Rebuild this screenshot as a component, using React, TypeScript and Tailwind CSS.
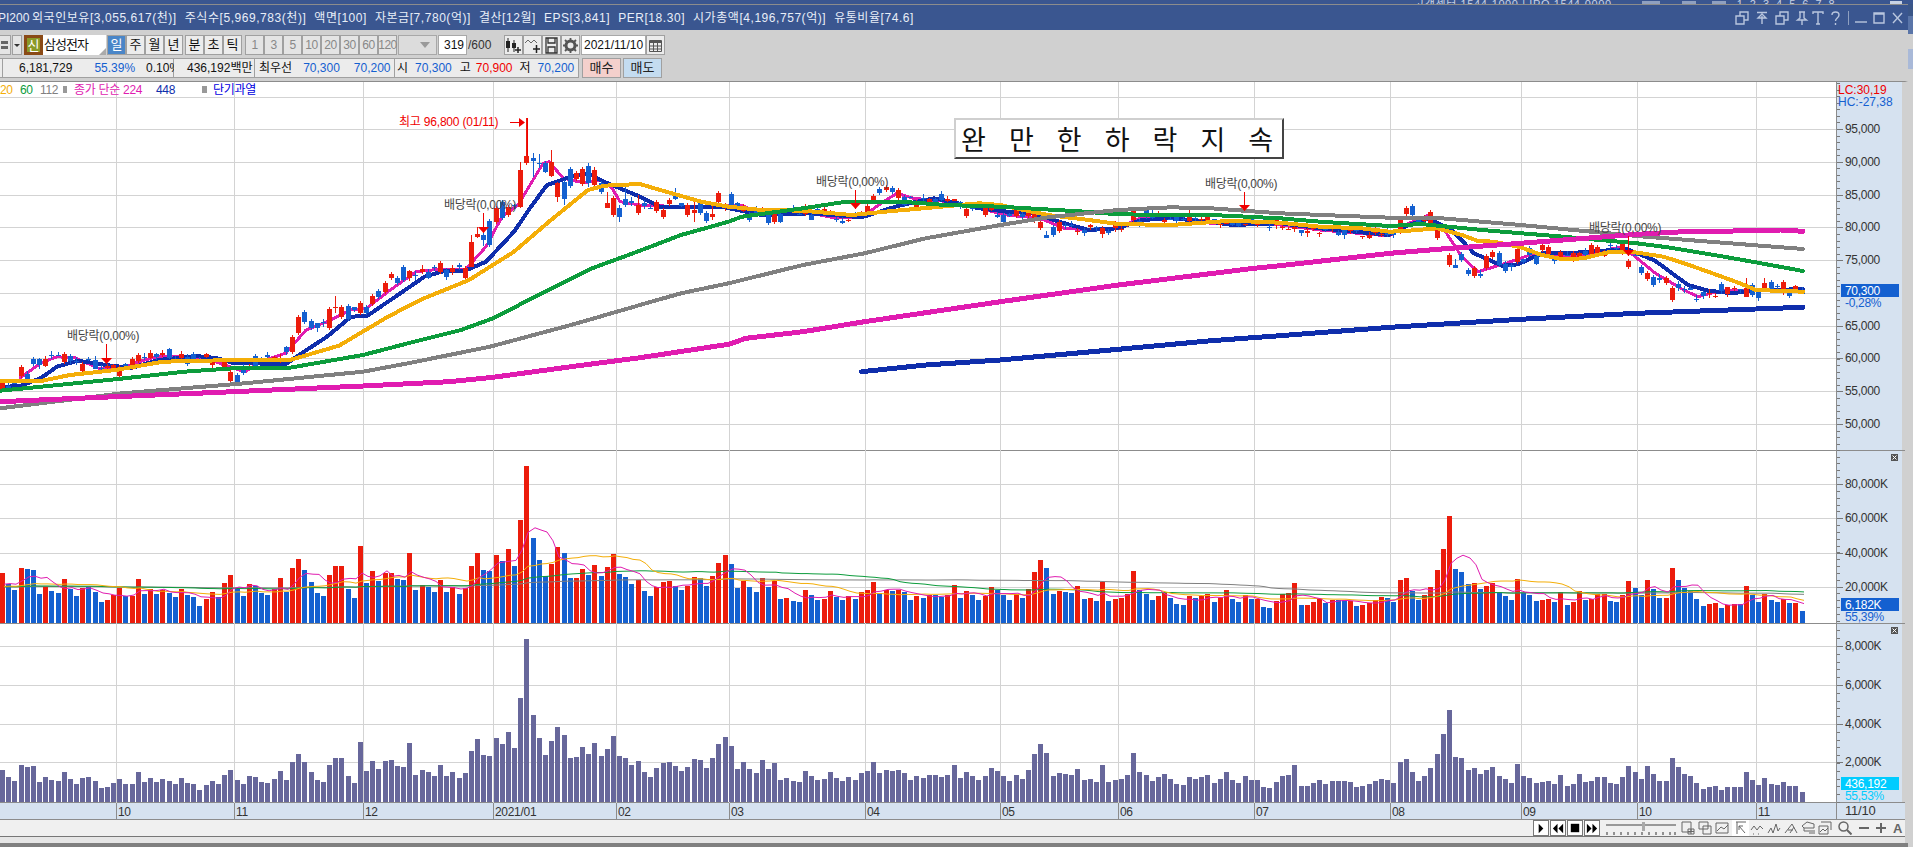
import React from "react";

type P = number[];
const poly = (p: P) => {
  const out: string[] = [];
  for (let i = 0; i < p.length; i += 2) out.push(p[i] + "," + p[i + 1]);
  return out.join(" ");
};

const MA448: P = [861.6,371.7,925.7,365,1000.4,360,1118.4,349.3,1211.4,340.7,1280,335.7,1390,327.3,1520.6,319.3,1637,313.3,1755.6,309,1803,307.3];
const MA224: P = [0,401.7,115.5,396.7,233.5,391.7,363,386,449,381.7,493,377.3,571,366.7,640,357.7,728.6,344.3,746,338.3,803,331.7,864.5,321.7,1000.4,301.7,1118.4,285,1254,268.3,1280,265.7,1390,253.3,1441.5,249,1520.6,243.3,1637,234.3,1683.7,231.7,1755.6,230.7,1780.6,230,1803,231.3];
const MA112: P = [0,408.3,122,393.3,245,383.3,363,371.7,408,363.3,490,346.7,571,325,640,305,681,293.3,728.6,283.3,803,265,864.5,253.3,925.7,238.3,1000.4,225,1048,217.3,1118,210,1170.6,207.3,1211,208.3,1280,213.3,1390,217.7,1441.5,218.3,1520.6,225,1637,236,1755.6,245.3,1803,249];
const MA60: P = [0,390.7,41,386.7,115.5,379.3,184,371.7,233.5,368.3,290,367.7,363,355,408,343.3,461,330,493,318.3,547,290.7,592,268.3,640,250.7,681,235,728.6,221.7,742,216.7,803,208.3,844,202,901,201.7,946,205,1000.4,206.7,1085,211.7,1118,214.3,1170.6,215,1211,215,1280,218.3,1320,221.7,1390,226,1421,224,1482,230,1563,236.7,1637,243.3,1667.6,247.3,1724,256.7,1755.6,262.3,1803,271];
const MA20: P = [0,381,41,381,70,375,115.5,370,163,361.7,233.5,360,290,360,339,345.7,388,316.7,420,300,469,280,514,251.7,551,220,588,190,604,185.7,640,184,660,190,701,201.7,728.6,206.7,762,210,803,210.7,852,215,885,211.7,934,207.3,979,203.3,1000,205,1048,215,1089,220,1118,224,1170.6,225,1232,220.7,1280,222.7,1320,226.7,1361,228.3,1390,231.7,1409,230.7,1437,228.3,1462,235,1478,241,1494,241.7,1520.6,247.3,1542,255,1563,259.3,1583,258.3,1611,251.7,1631,251.7,1663.5,256.7,1684,263.3,1708,271.7,1740,283.3,1756,290,1803,291.7];
const MA10: P = [0,387,20,386,41,378,57,366.7,78,360.7,106,365,131,368,159,360,196,356,216,358,233.5,363,286,364,302,353,327,336.7,351,316.7,367,316,392,299,424.5,276.7,445,270.7,465,270.7,486,261.7,514,231.7,531,206.7,547,185,571,176.7,588,173.3,604,181.7,640,196.7,660,206.7,681,207.3,721.6,206.7,746,211.7,762,215,811,213.3,861.6,217.3,901,205,934,198.3,958,203.3,979,208.3,1007,211.7,1032,213.3,1064.5,223.3,1089,230,1118,228.3,1142,220,1170.6,218.3,1211,221.7,1232,225,1280,223.3,1320,228.3,1389,235,1409,225,1429,218.3,1453.6,231.7,1474,253.3,1502,265.7,1518,264.3,1542,253.3,1575,252.7,1627,249,1655,260.7,1688,285,1708,290.7,1732,293.3,1755.6,290,1803,289.3];
const MA5: P = [20,378,41,363,57,356.7,75.5,358,98,368,118,370,139,361.7,159,356,180,356.7,204,358,233.5,368,245,371.7,261,361.7,286,353,306,330,327,321.7,351,310,367,308,388,291.7,416,271.7,441,269,465,270,486,246.7,502,216.7,518,205,543,163.3,549,161.7,563,178,584,183,600,180,612,188,620,201.7,640,205,681,206.7,742,205,762,215,803,211.7,832,217.3,861.6,217.3,881,203.3,897,193.3,913.5,198.3,950,201.7,979,208.3,1007,215,1040,218.3,1064.5,228.3,1089,230,1118,228.3,1142,217.3,1170.6,217.3,1211,223.3,1244,221.7,1280,225,1320,230,1389,236,1409,223.3,1429,215,1445.5,231.7,1461.7,256.7,1478,271.7,1506,263.3,1530,255,1562.6,256.7,1587,254,1623,246.7,1655.5,273.3,1683.7,290,1698,296.7,1720,290.7,1755.6,290.7,1803,290];

const ma5y = (x: number) => {
  if (x <= MA5[0]) return MA5[1] + 6;
  for (let i = 0; i < MA5.length - 2; i += 2) {
    if (x <= MA5[i + 2]) {
      const t = (x - MA5[i]) / (MA5[i + 2] - MA5[i]);
      return MA5[i + 1] + t * (MA5[i + 3] - MA5[i + 1]);
    }
  }
  return MA5[MA5.length - 1];
};

const CHUNKS = [
  { ox: 0, sx: 2.45, a: 5, b: 1562, s: "r372 b405 b423 r357 b360 b363 b435 r411 b426 b432 r390 b420 b441 r417 b414 b429 b459 r453 r438 r417 b441 r441 r390 b435 r420 b435 r423 b432 b444 r420 b438 b444 b471 r450 r429 b444 r402 r378 b417 b441 r405 b411 b432 b438 r420 r387 b429 r357 r330 b363 b399 b432 b441 r378 r351 r351 b420 b447 r291 b402 r366 b396 r372 r372 b390 b393 r312 b423 r408 b414 b429 r393 b429 r414 b435 r417 r351 r312 b363 b366 r318 b336 r300 b351 r213 r51 b267 b333 b381 r345 r294 b312 b387 r387 r360 b378 r348 b381 r354 r315 b375 b384 b405 r393" },
  { ox: 640, sx: 2.45, a: 10, b: 1557, s: "b426 b441 r414 r399 r396 b411 b423 r411 r384 b387 b411 r381 r342 r318 b345 b417 r396 b414 b429 r387 b414 r396 b450 r447 b456 b459 r423 b438 b453 r450 r426 b444 b453 r441 b450 r429 r423 r399 b432 r423 b426 r423 b429 b453 r441 b447 r438 b438 b444 r438 r408 b447 r426 b438 b453 r441 r414 b423 b438 b453 r435 b447 r420 r369 r333 b357 b435 r426 b429 b432 r411 b450 r447 b456 r399 b456 r450 r447 r435 r366 b423 b435 b453 r441 r432 b447 b465 b468 r441 b447 r441 r435 b459 r447 r423 b450 b459 r438 b450 r450 b474 b477 r456" },
  { ox: 1280, sx: 2.477, a: 5, b: 1292, s: "r435 r432 r402 b468 r468 r459 r450 b462 r453 b453 b453 r456 b471 r468 r462 r453 r444 b447 b459 r393 r387 b426 b453 r438 r414 r363 r300 r201 b360 b369 b405 r402 b420 r411 r402 b429 b441 b453 r390 b432 b438 b456 r453 r450 b459 r429 b468 r459 r426 b453 r450 r435 r435 b456 b459 r438 r396 b417 b438 r393 b420 b447 r447 r357 b393 b417 b426 b450 b471 r465 r462 b477 r468 r465 b465 r411 b438 b459 r435 b453 b459 r450 b462 r462 b486" },
];

type Bar = { x: number; up: boolean; h: number };
const bars: Bar[] = [];
for (const c of CHUNKS) {
  const toks = c.s.split(" ");
  toks.forEach((t, k) => {
    const x = c.ox + (c.a + ((c.b - c.a) * k) / (toks.length - 1)) / c.sx;
    const h = (522 - Number(t.slice(1))) / 3;
    bars.push({ x, up: t[0] === "r", h });
  });
}

const rnd = (i: number) => {
  const v = Math.sin(i * 12.9898 + 1.7) * 43758.5453;
  return v - Math.floor(v);
};

const OV: [number, number, number[][]][] = [
  [0, 2.45, [[48,800,828],[732,650,700],[747,635,665],[714,712,755],[760,662,685],[807,627,683],[822,620,625,588,640],[837,620,650],[852,618,658],[881,608,640],[897,622,640],[913,588,612],[927,572,590],[942,550,575],[957,522,535],[974,535,550],[989,502,540],[1141,503,533],[1155,425,500,405,500],[1170,402,410,380,415],[1184,405,420,385,438],[1199,363,435],[1216,325,365],[1231,305,353],[1246,320,345],[1275,210,320,185,325],[1292,168,188,55,195],[1307,175,182,160,230],[1322,188,192,162,205],[1337,190,215,183,218],[1351,187,228,150,230],[1366,250,290,245,305],[1383,247,297,240,315],[1398,208,258],[1412,220,237],[1427,208,252],[1442,198,248,188,260],[1459,210,255,202,260],[1474,250,275],[1488,310,325,275,325],[1503,295,345],[1518,325,350,315,365],[1535,298,315,260,320],[1563,315,340,285,345],[565,815,842],[580,825,850],[290,800,827],[322,778,805],[337,765,783],[152,762,787],[200,793,812],[79,778,792],[623,768,798],[594,798,820]]],
  [640, 2.45, [[42,305,332],[57,330,352],[72,300,313],[87,285,298,265,300],[116,315,345],[133,330,338,300,365],[148,310,340],[163,340,362],[177,342,352,312,360],[192,280,307],[224,282,318],[268,343,360],[285,325,345],[315,337,370],[329,340,365],[572,288,305],[587,268,280],[601,262,270],[618,265,275],[633,270,293],[648,292,315],[677,305,328],[800,328,348],[845,322,345],[890,345,365],[966,335,362],[981,365,385],[996,405,413,392,415],[1013,382,405],[1028,367,392],[1209,328,360],[1239,330,350]]],
  [1280, 2.477, [[295,355,395],[310,323,343],[325,318,345],[372,337,380],[387,390,413],[420,465,495],[435,495,503,478,505],[465,510,522],[480,505,528],[512,468,505],[527,455,472],[541,460,495],[588,448,485],[618,445,465],[648,435,450],[665,440,462],[695,455,478],[725,458,480],[772,435,462],[787,440,460],[848,427,458],[863,482,500],[893,502,520],[910,520,537],[925,530,555],[955,535,550],[970,565,600],[1155,565,590,535,592],[1170,555,585],[1200,550,567,535,570],[1215,547,572],[1247,547,578]]],
];
const overrides = OV.flatMap(([ox, sx, list]) =>
  list.map((o) => ({
    x: ox + o[0] / sx,
    t: 100 + o[1] / 3,
    b: 100 + o[2] / 3,
    hi: o[3] === undefined ? 100 + o[1] / 3 - 2 : 100 + o[3] / 3,
    lo: o[4] === undefined ? 100 + o[2] / 3 + 2 : 100 + o[4] / 3,
  }))
);

const candles = bars.map((b, i) => {
  const o = overrides.find((v) => Math.abs(v.x - b.x) < 2.6);
  if (o) return { x: b.x, up: b.up, t: o.t, b: o.b, hi: o.hi, lo: o.lo };
  const yc = ma5y(b.x) + (rnd(i) - 0.5) * 9;
  const bh = 1 + Math.floor(rnd(i + 500) * rnd(i + 900) * 9);
  const t = yc - bh / 2;
  return { x: b.x, up: b.up, t, b: t + bh, hi: t - rnd(i + 77) * 4, lo: t + bh + rnd(i + 33) * 4 };
});

// traded value (third pane) = volume x closing price
const values = bars.map((b, i) => {
  const c = candles[i];
  const close = b.up ? c.t : c.b;
  const p = 95000 - ((close - 129) / 32.8) * 5000;
  return b.h * p * 1.1404e-5;
});

const maVol = (k: number) => {
  const out: number[] = [];
  bars.forEach((b, i) => {
    let s = 0;
    for (let j = i - k + 1; j <= i; j++) s += j >= 0 ? bars[j].h : 36;
    out.push(Math.round(b.x + 2), 624 - s / k);
  });
  return out;
};

const RED = "#ec1c0c";
const BLUE = "#1460d0";
const GRID = "#d3d3d3";
const VX = [115.5, 233.5, 363, 493, 616, 728.6, 864.5, 1000.4, 1118.4, 1254.3, 1390, 1520.6, 1637, 1755.6];
const MONTHS = ["10", "11", "12", "2021/01", "02", "03", "04", "05", "06", "07", "08", "09", "10", "11"];

const Grid = ({ top, h, ys }: { top: number; h: number; ys: number[] }) => (
  <g stroke={GRID} strokeWidth="1" shapeRendering="crispEdges">
    {ys.map((y) => (
      <line key={y} x1="0" x2="1836" y1={y + 0.5} y2={y + 0.5} />
    ))}
    {VX.map((x) => (
      <line key={x} x1={Math.round(x) + 0.5} x2={Math.round(x) + 0.5} y1={top} y2={top + h} />
    ))}
  </g>
);

const Drop = ({ x, y1, y2, label }: { x: number; y1: number; y2: number; label: string }) => (
  <g>
    <text x={x - 39} y={y1 - 4} fontSize="12" fill="#444" letterSpacing="-0.3">
      {label}
    </text>
    <line x1={x + 0.5} x2={x + 0.5} y1={y1} y2={y2} stroke="#f00000" strokeWidth="1" shapeRendering="crispEdges" />
    <polygon points={`${x - 5},${y2 - 6} ${x + 6},${y2 - 6} ${x + 0.5},${y2}`} fill="#f00000" />
  </g>
);

const Axis = ({
  top,
  h,
  ticks,
  step,
  children,
}: {
  top: number;
  h: number;
  ticks: [number, string][];
  step: number;
  children?: React.ReactNode;
}) => {
  const minor: number[] = [];
  const base = ticks[0][0];
  for (let y = base - step * 40; y < top + h; y += step) if (y > top) minor.push(y);
  return (
    <div className="w-[66px] shrink-0 bg-[#d6e2f0] border-l border-[#8c8c8c]">
      <svg width="65" height={h} viewBox={`1837 ${top} 65 ${h}`} className="block">
        <g stroke="#777" strokeWidth="1" shapeRendering="crispEdges">
          {minor.map((y) => (
            <line key={y} x1="1837" x2="1840" y1={Math.round(y) + 0.5} y2={Math.round(y) + 0.5} />
          ))}
          {ticks.map(([y]) => (
            <line key={y} x1="1837" x2="1843" y1={y + 0.5} y2={y + 0.5} />
          ))}
        </g>
        {ticks.map(([y, t]) => (
          <text key={y} x="1845" y={y + 4} fontSize="12" fill="#333" letterSpacing="-0.3">
            {t}
          </text>
        ))}
        {children}
      </svg>
    </div>
  );
};

const Tag = ({ y, h = 13, bg, text, sub, subColor }: { y: number; h?: number; bg: string; text: string; sub: string; subColor: string }) => (
  <g>
    <rect x="1841" y={y} width="58" height={h} fill={bg} />
    <text x="1845" y={y + 10.5} fontSize="12" fill="#fff" letterSpacing="-0.3">
      {text}
    </text>
    <text x="1845" y={y + h + 10} fontSize="12" fill={subColor} letterSpacing="-0.3">
      {sub}
    </text>
  </g>
);

const CloseBox = ({ y }: { y: number }) => (
  <g>
    <rect x="1891" y={y} width="7" height="7" fill="#555" />
    <path d={`M1892.5 ${y + 1.5}l4 4m0-4l-4 4`} stroke="#fff" strokeWidth="1" />
  </g>
);

const Btn = ({ w, on, dim, children }: { w: string; on?: boolean; dim?: boolean; children?: React.ReactNode }) => (
  <div
    className={`${w} shrink-0 flex items-center justify-center border border-[#a0a0a0] text-[13px] ${
      on ? "bg-[#4a86c8] text-white" : dim ? "bg-[#e4e4e4] text-[#888]" : "bg-[#ececec] text-[#111]"
    }`}
  >
    {children}
  </div>
);

const TitleIcon = ({ d, ml }: { d: string; ml: string }) => (
  <svg width="14" height="14" viewBox="0 0 14 14" fill="none" stroke="#b9c6de" strokeWidth="1.4" className={`shrink-0 ${ml}`}>
    <path d={d} />
  </svg>
);

const Tool = ({ d, fill }: { d: string; fill?: boolean }) => (
  <svg width="14" height="14" viewBox="0 0 14 14" fill={fill ? "#666" : "none"} stroke="#666" strokeWidth={fill ? 0 : 1} className="shrink-0">
    <path d={d} />
  </svg>
);

const Small = ({ ml, c, children, w }: { ml: string; c?: string; children: React.ReactNode; w?: string }) => (
  <span className={`${ml} ${w ?? ""} ${c ?? "text-[#111]"} shrink-0 whitespace-nowrap`}>{children}</span>
);

const TITLE = ["외국인보유[3,055,617(천)]", "주식수[5,969,783(천)]", "액면[100]", "자본금[7,780(억)]", "결산[12월]", "EPS[3,841]", "PER[18.30]", "시가총액[4,196,757(억)]", "유통비율[74.6]"];

export default function App() {
  return (
    <div className="w-[1913px] h-[847px] overflow-hidden flex flex-col bg-[#808080] [font-family:'Liberation_Sans','Noto_Sans_CJK_KR',sans-serif]">
      <div className="h-[4px] w-full shrink-0 overflow-hidden bg-[#3a5690] flex items-end">
        <span className="ml-[1414px] text-[11px] leading-[11px] -mb-[6px] text-[#c8d2e4] whitespace-nowrap tracking-[0.6px]">고객센터 1544-1000 | IPO 1544-0000</span>
        <span className="ml-[30px] w-[18px] h-[3px] bg-[#8fa0c0]" />
        <span className="ml-[22px] w-[14px] h-[3px] bg-[#8fa0c0]" />
        <span className="ml-[16px] w-[14px] h-[3px] bg-[#8fa0c0]" />
        <span className="ml-[11px] text-[11px] leading-[11px] -mb-[6px] text-[#c8d2e4] whitespace-nowrap tracking-[7px]">12345678</span>
        <span className="ml-[48px] w-[12px] h-[3px] bg-[#c8d2e4]" />
      </div>
      <div className="flex flex-1 min-h-0">
        <div className="w-[1908px] shrink-0 flex flex-col border-t border-[#8c8c8c]">
          <div className="h-[25px] shrink-0 bg-[#3a5690] flex items-center overflow-hidden text-[12px] text-[#e8eef8]">
            <span className="-ml-[2px] w-[34px] shrink-0 whitespace-nowrap">PI200</span>
            <div className="flex gap-[8px] tracking-[0.55px] whitespace-nowrap">
              {TITLE.map((t) => (
                <span key={t}>{t}</span>
              ))}
            </div>
            <div className="ml-auto mr-[4px] flex items-center">
              <TitleIcon ml="" d="M1 5h8v8H1zM5 5V1h8v8H9" />
              <TitleIcon ml="ml-[6px]" d="M2 1.5h10M7 13V5M3 7l4-4 4 4z" />
              <TitleIcon ml="ml-[6px]" d="M1 5h8v8H1zM5 5V1h8v8H9" />
              <TitleIcon ml="ml-[6px]" d="M4 1h6M5 1v6L2.5 9h9L9 7V1M7 9v5" />
              <TitleIcon ml="ml-[2px]" d="M2 3V1h10v2M7 1v12M5 13h4" />
              <TitleIcon ml="ml-[3px]" d="M4 4c0-4 7-4 7 0 0 3-3.5 3-3.5 6M7.5 12v2" />
              <span className="ml-[6px] w-[1px] bg-[#8fa0c0] h-[14px]" />
              <TitleIcon ml="ml-[5px]" d="M1 11h12" />
              <TitleIcon ml="ml-[4px]" d="M2 2h10v10H2zM2 3h10" />
              <TitleIcon ml="ml-[4px]" d="M3 2l9 10M12 2L3 12" />
            </div>
          </div>
          <div className="h-[51px] shrink-0 bg-[#d0d0d0] pt-[5px] flex flex-col gap-[3px] text-[12px]">
            <div className="h-[20px] flex items-stretch">
              <div className="w-[11px] shrink-0 bg-[#e4e4e4] border-y border-r border-[#a0a0a0] flex flex-col justify-center pl-[1px] gap-[2px]">
                <span className="h-[3px] w-[7px] bg-[#666]" />
                <span className="h-[3px] w-[7px] bg-[#666]" />
              </div>
              <div className="ml-[1px] w-[10px] shrink-0 bg-[#e4e4e4] border border-[#a0a0a0] flex items-center justify-center">
                <span className="border-x-[3px] border-t-[3px] border-x-transparent border-t-[#333]" />
              </div>
              <div className="ml-[2px] w-[19px] shrink-0 border-[3px] border-[#8a4a16] bg-[#8a9a28] text-white text-[13px] leading-none flex items-center justify-center">신</div>
              <div className="w-[63px] shrink-0 bg-white text-[13px] tracking-[-1px] text-[#111] flex items-center pl-[1px] whitespace-nowrap overflow-hidden relative">
                삼성전자
                <span className="absolute right-0 bottom-0 border-l-[7px] border-b-[7px] border-l-transparent border-b-[#aaa]" />
              </div>
              <div className="ml-[1px] flex">
                <Btn w="w-[19px]" on>일</Btn>
                <Btn w="w-[19px]">주</Btn>
                <Btn w="w-[19px]">월</Btn>
                <Btn w="w-[19px]">년</Btn>
              </div>
              <div className="ml-[2px] flex">
                <Btn w="w-[19px]">분</Btn>
                <Btn w="w-[19px]">초</Btn>
                <Btn w="w-[19px]">틱</Btn>
              </div>
              <div className="ml-[3px] flex tracking-[-0.5px]">
                {["1", "3", "5", "10", "20", "30", "60", "120"].map((t) => (
                  <Btn key={t} w="w-[19px]" dim>
                    <span className="text-[12px]">{t}</span>
                  </Btn>
                ))}
              </div>
              <div className="ml-[1px] w-[39px] shrink-0 bg-[#dcdcdc] border border-[#a8a8a8] flex items-center justify-end pr-[6px]">
                <span className="border-x-[5px] border-t-[6px] border-x-transparent border-t-[#999]" />
              </div>
              <div className="ml-[1px] w-[29px] shrink-0 bg-white border border-[#a8a8a8] text-[#111] flex items-center justify-end pr-[2px]">319</div>
              <div className="w-[26px] shrink-0 flex items-center pl-[1px] text-[#333]">/600</div>
              <div className="ml-[11px] flex">
                <Btn w="w-[19px]">
                  <svg width="17" height="17" viewBox="0 0 17 17">
                    <path d="M3 1v14M9 3v12" stroke="#222" />
                    <rect x="1" y="4" width="4" height="7" fill="#222" />
                    <rect x="7" y="6" width="4" height="5" fill="#222" />
                    <path d="M10 13h6M13 10v6" stroke="#222" strokeWidth="1.5" />
                  </svg>
                </Btn>
                <Btn w="w-[19px]">
                  <svg width="17" height="17" viewBox="0 0 17 17" fill="none">
                    <path d="M1 6l3-3 3 3 3-3 3 3" stroke="#666" />
                    <path d="M9 12h7M12.5 8v8" stroke="#222" strokeWidth="1.5" />
                  </svg>
                </Btn>
                <Btn w="w-[19px]">
                  <svg width="15" height="17" viewBox="0 0 15 17" fill="none" stroke="#333" strokeWidth="1.3">
                    <path d="M2 1h11v15H2zM4 1v5h7V1M4 16v-6h7v6" />
                  </svg>
                </Btn>
                <Btn w="w-[19px]">
                  <svg width="15" height="15" viewBox="0 0 15 15">
                    <circle cx="7.5" cy="7.5" r="4.5" fill="none" stroke="#555" strokeWidth="3" />
                    <path d="M7.5 0v3M7.5 12v3M0 7.5h3M12 7.5h3M2 2l2 2M11 11l2 2M2 13l2-2M11 4l2-2" stroke="#555" strokeWidth="1.8" />
                  </svg>
                </Btn>
              </div>
              <div className="ml-[1px] w-[65px] shrink-0 bg-white border border-[#a8a8a8] text-[#111] flex items-center pl-[2px] whitespace-nowrap">2021/11/10</div>
              <Btn w="w-[19px]">
                <svg width="13" height="13" viewBox="0 0 13 13" fill="none" stroke="#555">
                  <path d="M.5 1.5h12v11H.5z" />
                  <path d="M.5 3h12" strokeWidth="2" />
                  <path d="M.5 7h12M.5 10h12M4.5 4v8M8.5 4v8" />
                </svg>
              </Btn>
            </div>
            <div className="h-[20px] flex items-stretch">
              <div className="w-[2px] shrink-0 bg-[#ececec] border-y border-[#a0a0a0]" />
              <div className="w-[172px] shrink-0 bg-[#ececec] border border-[#a0a0a0] flex items-center text-[12px]">
                <Small ml="ml-[16px]">6,181,729</Small>
                <Small ml="ml-[22px]" c="text-[#1460d0]">55.39%</Small>
                <Small ml="ml-[11px]">0.10%</Small>
              </div>
              <div className="w-[81px] shrink-0 bg-[#ececec] border-y border-r border-[#a0a0a0] flex items-center">
                <Small ml="ml-[13px]">436,192백만</Small>
              </div>
              <div className="w-[140px] shrink-0 bg-[#ececec] border-y border-r border-[#a0a0a0] flex items-center">
                <Small ml="ml-[4px]">최우선</Small>
                <Small ml="ml-[11px]" c="text-[#1460d0]">70,300</Small>
                <Small ml="ml-[14px]" c="text-[#1460d0]">70,200</Small>
              </div>
              <div className="w-[184px] shrink-0 bg-[#ececec] border-y border-r border-[#a0a0a0] flex items-center">
                <Small ml="ml-[2px]">시</Small>
                <Small ml="ml-[7px]" c="text-[#1460d0]">70,300</Small>
                <Small ml="ml-[8px]">고</Small>
                <Small ml="ml-[5px]" c="text-[#f00000]">70,900</Small>
                <Small ml="ml-[7px]">저</Small>
                <Small ml="ml-[7px]" c="text-[#1460d0]">70,200</Small>
              </div>
              <div className="ml-[3px] w-[39px] shrink-0 bg-[#f4d0cc] border border-[#a0a0a0] flex items-center justify-center text-[13px] text-[#222]">매수</div>
              <div className="ml-[2px] w-[39px] shrink-0 bg-[#c4dcf0] border border-[#a0a0a0] flex items-center justify-center text-[13px] text-[#222]">매도</div>
            </div>
          </div>
          <div className="flex-1 min-h-0 flex flex-col bg-[#d0d0d0] border-r-[3px] border-r-[#d0d0d0] border-t border-[#8c8c8c]">
            <div className="flex h-[369px] shrink-0 border-b border-[#8c8c8c]">
              <div className="w-[1836px] shrink-0 relative bg-white">
                <svg width="1836" height="369" viewBox="0 82 1836 369" className="block">
                  <Grid top={82} h={369} ys={[97, 129, 162, 195, 227, 260, 293, 326, 358, 391, 424]} />
                  <g fill="none" strokeLinejoin="round" strokeLinecap="round" shapeRendering="crispEdges">
                    <polyline points={poly(MA5)} stroke="#e01cb0" strokeWidth="3" />
                    <polyline points={poly(MA10)} stroke="#0f2eac" strokeWidth="4" />
                  </g>
                  <g shapeRendering="crispEdges">
                    {candles.map((c, i) => {
                      const x = Math.round(c.x);
                      const col = c.up ? RED : BLUE;
                      return (
                        <g key={i}>
                          <line x1={x + 0.5} x2={x + 0.5} y1={c.hi} y2={c.lo} stroke={col} strokeWidth="1" />
                          <rect x={x - 2} y={c.t} width="5" height={Math.max(1, c.b - c.t)} fill={col} />
                        </g>
                      );
                    })}
                  </g>
                  <g fill="none" strokeLinejoin="round" strokeLinecap="round" shapeRendering="crispEdges">
                    <polyline points={poly(MA20)} stroke="#f4ae08" strokeWidth="4" />
                    <polyline points={poly(MA60)} stroke="#0c9c3c" strokeWidth="4" />
                    <polyline points={poly(MA112)} stroke="#808080" strokeWidth="4" />
                    <polyline points={poly(MA224)} stroke="#e01cb0" strokeWidth="5" />
                    <polyline points={poly(MA448)} stroke="#0f2eac" strokeWidth="5" />
                  </g>
                  <text x="399" y="126" fontSize="12" fill="#f00000" letterSpacing="-0.2">최고 96,800 (01/11)</text>
                  <path d="M510 122.5h14" stroke="#f00000" />
                  <polygon points="519,118 525,122.5 519,127" fill="#f00000" />
                  <line x1="527.5" x2="527.5" y1="118" y2="156" stroke="#f00000" shapeRendering="crispEdges" />
                  <Drop x={106} y1={344} y2={364} label="배당락(0,00%)" />
                  <Drop x={483} y1={213} y2={233} label="배당락(0,00%)" />
                  <Drop x={855} y1={190} y2={209} label="배당락(0,00%)" />
                  <Drop x={1244} y1={192} y2={211} label="배당락(0,00%)" />
                  <Drop x={1628} y1={236} y2={256} label="배당락(0,00%)" />
                </svg>
                <div className="absolute left-0 top-0 h-[15px] flex items-center text-[12px] tracking-[-0.3px]">
                  <span className="w-[20px] shrink-0 text-[#f4ae08]">20</span>
                  <span className="w-[20px] shrink-0 text-[#0c9c3c]">60</span>
                  <span className="w-[23px] shrink-0 text-[#808080]">112</span>
                  <span className="w-[4px] h-[7px] bg-[#999] shrink-0" />
                  <span className="ml-[7px] w-[82px] shrink-0 text-[#e01cb0] whitespace-nowrap">종가 단순 224</span>
                  <span className="w-[46px] shrink-0 text-[#0f2eac]">448</span>
                  <span className="w-[5px] h-[7px] bg-[#999] shrink-0" />
                  <span className="ml-[6px] shrink-0 text-[#0000e0] whitespace-nowrap">단기과열</span>
                </div>
                <div className="absolute left-[954px] top-[36px] w-[330px] h-[41px] bg-white border-2 border-t-[#cfcfcf] border-l-[#cfcfcf] border-b-[#444] border-r-[#444] flex items-center pl-[5px] text-[27px] leading-none text-[#111] whitespace-pre tracking-[8.5px] [font-family:'Noto_Sans_CJK_KR',sans-serif]">
                  완 만 한 하 락 지 속
                </div>
              </div>
              <Axis
                top={82}
                h={369}
                step={6.56}
                ticks={[[129, "95,000"], [162, "90,000"], [195, "85,000"], [227, "80,000"], [260, "75,000"], [326, "65,000"], [358, "60,000"], [391, "55,000"], [424, "50,000"]]}
              >
                <text x="1838" y="94" fontSize="12" fill="#f00000">LC:30,19</text>
                <text x="1838" y="106" fontSize="12" fill="#1460d0">HC:-27,38</text>
                <Tag y={284} bg={BLUE} text="70,300" sub="-0,28%" subColor={BLUE} />
              </Axis>
            </div>
            <div className="flex h-[173px] shrink-0 border-b border-[#8c8c8c]">
              <div className="w-[1836px] shrink-0 bg-white">
                <svg width="1836" height="173" viewBox="0 452 1836 173" className="block">
                  <Grid top={452} h={173} ys={[485, 519, 554, 588]} />
                  <g shapeRendering="crispEdges">
                    {bars.map((b, i) => (
                      <rect key={i} x={Math.round(b.x) - 2} y={624 - b.h} width="5" height={b.h} fill={b.up ? RED : BLUE} />
                    ))}
                  </g>
                  <g fill="none" strokeWidth="1">
                    <polyline points={poly(maVol(120))} stroke="#808080" />
                    <polyline points={poly(maVol(60))} stroke="#0c9c3c" />
                    <polyline points={poly(maVol(20))} stroke="#f4ae08" />
                    <polyline points={poly(maVol(5))} stroke="#e01cb0" />
                  </g>
                </svg>
              </div>
              <Axis top={452} h={173} step={6.84} ticks={[[485, "80,000K"], [519, "60,000K"], [554, "40,000K"], [588, "20,000K"]]}>
                <CloseBox y={455} />
                <Tag y={599} bg={BLUE} text="6,182K" sub="55,39%" subColor={BLUE} />
              </Axis>
            </div>
            <div className="flex h-[179px] shrink-0 border-b border-[#8c8c8c]">
              <div className="w-[1836px] shrink-0 bg-white">
                <svg width="1836" height="179" viewBox="0 626 1836 179" className="block">
                  <Grid top={626} h={179} ys={[648, 687, 726, 764]} />
                  <g shapeRendering="crispEdges">
                    {bars.map((b, i) => (
                      <rect key={i} x={Math.round(b.x) - 2} y={804 - values[i]} width="5" height={values[i]} fill="#67679b" />
                    ))}
                  </g>
                </svg>
              </div>
              <Axis top={626} h={179} step={7.8} ticks={[[648, "8,000K"], [687, "6,000K"], [726, "4,000K"], [764, "2,000K"]]}>
                <CloseBox y={629} />
                <Tag y={779} bg="#00ccff" text="436,192" sub="55,53%" subColor="#00ccff" />
              </Axis>
            </div>
            <div className="h-[17px] shrink-0 flex bg-[#d6e2f0] border-b border-[#8c8c8c]">
              <div className="w-[1836px] shrink-0">
                <svg width="1836" height="17" viewBox="0 806 1836 17" className="block">
                  {VX.map((x, i) => (
                    <g key={x}>
                      <line x1={Math.round(x) + 0.5} x2={Math.round(x) + 0.5} y1="806" y2="823" stroke="#8c8c8c" shapeRendering="crispEdges" />
                      <text x={Math.round(x) + 2} y="819" fontSize="12" fill="#333" letterSpacing="-0.3">
                        {MONTHS[i]}
                      </text>
                    </g>
                  ))}
                </svg>
              </div>
              <div className="w-[66px] shrink-0 border-l border-[#8c8c8c] pl-[8px] flex items-center text-[13px] text-[#333] tracking-[-0.2px]">11/10</div>
            </div>
            <div className="h-[17px] shrink-0 flex items-center bg-[#f0f0f0] border-b border-[#777]">
              <div className="w-[1533px] shrink-0" />
              <div className="flex gap-[1px] h-[16px] shrink-0">
                {[
                  "M5 3l5 5-5 5z",
                  "M7 3L2 8l5 5zM13 3L8 8l5 5z",
                  "M3 3h9v9H3z",
                  "M2 3l5 5-5 5zM8 3l5 5-5 5z",
                ].map((d) => (
                  <div key={d} className="w-[16px] bg-white border border-[#777] flex items-center justify-center">
                    <svg width="14" height="14" viewBox="0 0 15 15">
                      <path d={d} fill="#000" />
                    </svg>
                  </div>
                ))}
              </div>
              <svg width="72" height="16" viewBox="0 0 72 16" className="ml-[5px] shrink-0">
                <rect x="1" y="4" width="70" height="2" fill="#999" />
                <rect x="37" y="2" width="3" height="9" fill="#aaa" />
                <path d="M2 12v3M9 12v3M16 12v3M23 12v3M30 12v3M37 12v3M44 12v3M51 12v3M58 12v3M65 12v3M70 12v3" stroke="#333" />
              </svg>
              <div className="ml-[4px] flex gap-[3px] shrink-0">
                <Tool d="M1 1h9v10H1zM7 8h6v5H7zM10 8v5M7 10.5h6" />
                <Tool d="M1 1h9v7H1zM5 5h8v8H5z" />
                <Tool d="M1 2h12M1 12h12M1 2v10M13 2v10M2 10l4-4 3 2 4-4" />
              </div>
              <div className="ml-[3px] w-[17px] h-[16px] bg-white flex items-center justify-center shrink-0">
                <Tool d="M2 1h10M3 1v12M11 12L5 5M5 5v4M5 5h4" />
              </div>
              <div className="ml-[1px] flex gap-[3px] shrink-0">
                <Tool d="M1 9l3-4 3 4 3-4 3 3M3 13h1M8 13h1" />
                <Tool d="M1 12l3-5 2 5 3-9 2 7 2-3" />
                <Tool d="M1 12L8 3l5 9M4 9h5M6 12l4-6" />
                <Tool d="M1 5l5-4 7 2v4H3zM3 7v3h5M9 13V9M11 13V9M13 13V9" />
                <Tool d="M3 1h10v8M1 5h9v8H1zM2 11l3-3 2 2 3-3" />
              </div>
              <svg width="14" height="14" viewBox="0 0 14 14" fill="none" stroke="#666" strokeWidth="1.5" className="ml-[6px] shrink-0">
                <circle cx="5.5" cy="5.5" r="4.5" />
                <path d="M9 9l4.5 4.5" strokeWidth="2" />
              </svg>
              <span className="ml-[7px] w-[10px] h-[2px] bg-[#666] shrink-0" />
              <span className="ml-[7px] relative w-[10px] h-[10px] shrink-0 flex items-center justify-center">
                <span className="w-[10px] h-[2px] bg-[#666]" />
                <span className="absolute w-[2px] h-[10px] bg-[#666]" />
              </span>
              <span className="ml-[7px] text-[13px] font-bold text-[#666] leading-none">A</span>
            </div>
            <div className="flex-1 bg-[#e6e6e6]" />
          </div>
          <div className="h-[4px] shrink-0 bg-[#808080]" />
        </div>
        <div className="w-[5px] shrink-0 flex flex-col bg-[#d0d0d0]">
          <div className="h-[12px] bg-[#3a5688]" />
          <div className="h-[18px] bg-[#5a75a8]" />
          <div className="h-[15px] bg-[#d0d0d0]" />
          <div className="h-[20px] bg-[#a9b9d8]" />
          <div className="flex-1 bg-[#d0d0d0]" />
        </div>
      </div>
    </div>
  );
}
